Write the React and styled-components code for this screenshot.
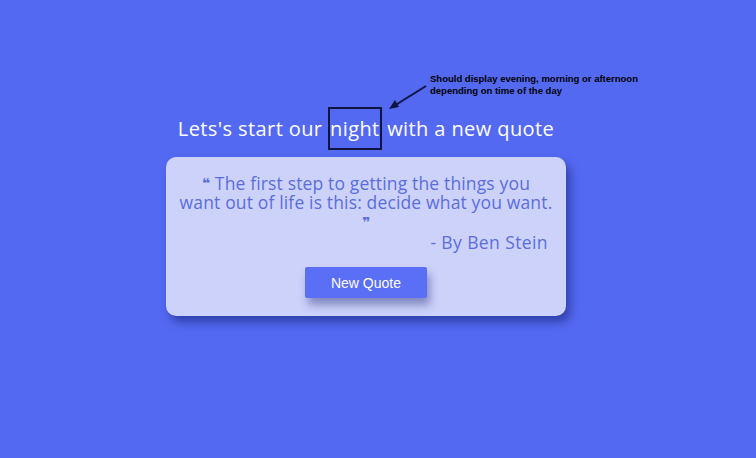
import styled, { createGlobalStyle } from "styled-components";

const GlobalStyle = createGlobalStyle`
  body {
    margin: 0;
    background: #5469f2;
    font-family: "Open Sans", "Liberation Sans", sans-serif;
  }
`;

const Page = styled.div`
  position: relative;
  min-height: 458px;
  box-sizing: border-box;
  padding: 116px 24px 0 0;
  display: flex;
  flex-direction: column;
  align-items: center;
`;

const Heading = styled.h1`
  margin: 0;
  font-size: 20px;
  font-weight: 400;
  line-height: 26px;
  letter-spacing: 0.4px;
  color: #ffffff;
`;

const Highlight = styled.span`
  border: 2px solid #0f1540;
  padding: 6px 0;
`;

const Note = styled.div`
  position: absolute;
  left: 430px;
  top: 73px;
  font-family: "Liberation Sans", Arial, sans-serif;
  font-size: 9.5px;
  font-weight: 700;
  line-height: 12px;
  color: #000;
`;

const Arrow = styled.svg`
  position: absolute;
  left: 386px;
  top: 84px;
`;

const Card = styled.div`
  margin-top: 15px;
  width: 400px;
  box-sizing: border-box;
  padding: 17px 8px 18px;
  background: #cdd2fb;
  border-radius: 10px;
  box-shadow: 4px 6px 10px rgba(20, 30, 110, 0.55);
  display: flex;
  flex-direction: column;
  align-items: center;
`;

const QuoteText = styled.p`
  margin: 0;
  text-align: center;
  font-size: 17.5px;
  line-height: 19px;
  letter-spacing: 0.15px;
  color: #5a6edb;
`;

const Mark = styled.span`
  font-family: "DejaVu Sans", sans-serif;
  font-weight: 700;
  font-size: 14px;
  line-height: 10px;
  vertical-align: 2px;
  letter-spacing: 0;
  color: #5a6edb;
`;

const CloseLine = styled.span`
  display: block;
  margin-top: 3px;
  line-height: 14px;
`;

const Author = styled.p`
  align-self: flex-end;
  margin: 3px 10px 0 0;
  font-size: 17.5px;
  line-height: 20px;
  letter-spacing: 0.4px;
  color: #5a6edb;
`;

const Button = styled.button`
  margin-top: 15px;
  width: 122px;
  height: 31px;
  border: none;
  border-radius: 2px;
  background: #5a6ef6;
  color: #fff;
  font-family: "Liberation Sans", Arial, sans-serif;
  font-size: 14px;
  box-shadow: 3px 7px 9px rgba(40, 50, 120, 0.45);
  cursor: pointer;
`;

export default function App() {
  return (
    <>
      <GlobalStyle />
      <Page>
        <Note>
          Should display evening, morning or afternoon
          <br />
          depending on time of the day
        </Note>
        <Arrow width="44" height="28" viewBox="0 0 44 28">
          <line x1="40" y1="2" x2="8" y2="22" stroke="#0f1540" strokeWidth="2" />
          <polygon points="3,25 9,16 13,23" fill="#0f1540" />
        </Arrow>
        <Heading>
          Lets's start our <Highlight>night</Highlight> with a new quote
        </Heading>
        <Card>
          <QuoteText>
            <Mark>❝</Mark> The first step to getting the things you
            <br />
            want out of life is this: decide what you want.
            <CloseLine>
              <Mark>❞</Mark>
            </CloseLine>
          </QuoteText>
          <Author>- By Ben Stein</Author>
          <Button>New Quote</Button>
        </Card>
      </Page>
    </>
  );
}
